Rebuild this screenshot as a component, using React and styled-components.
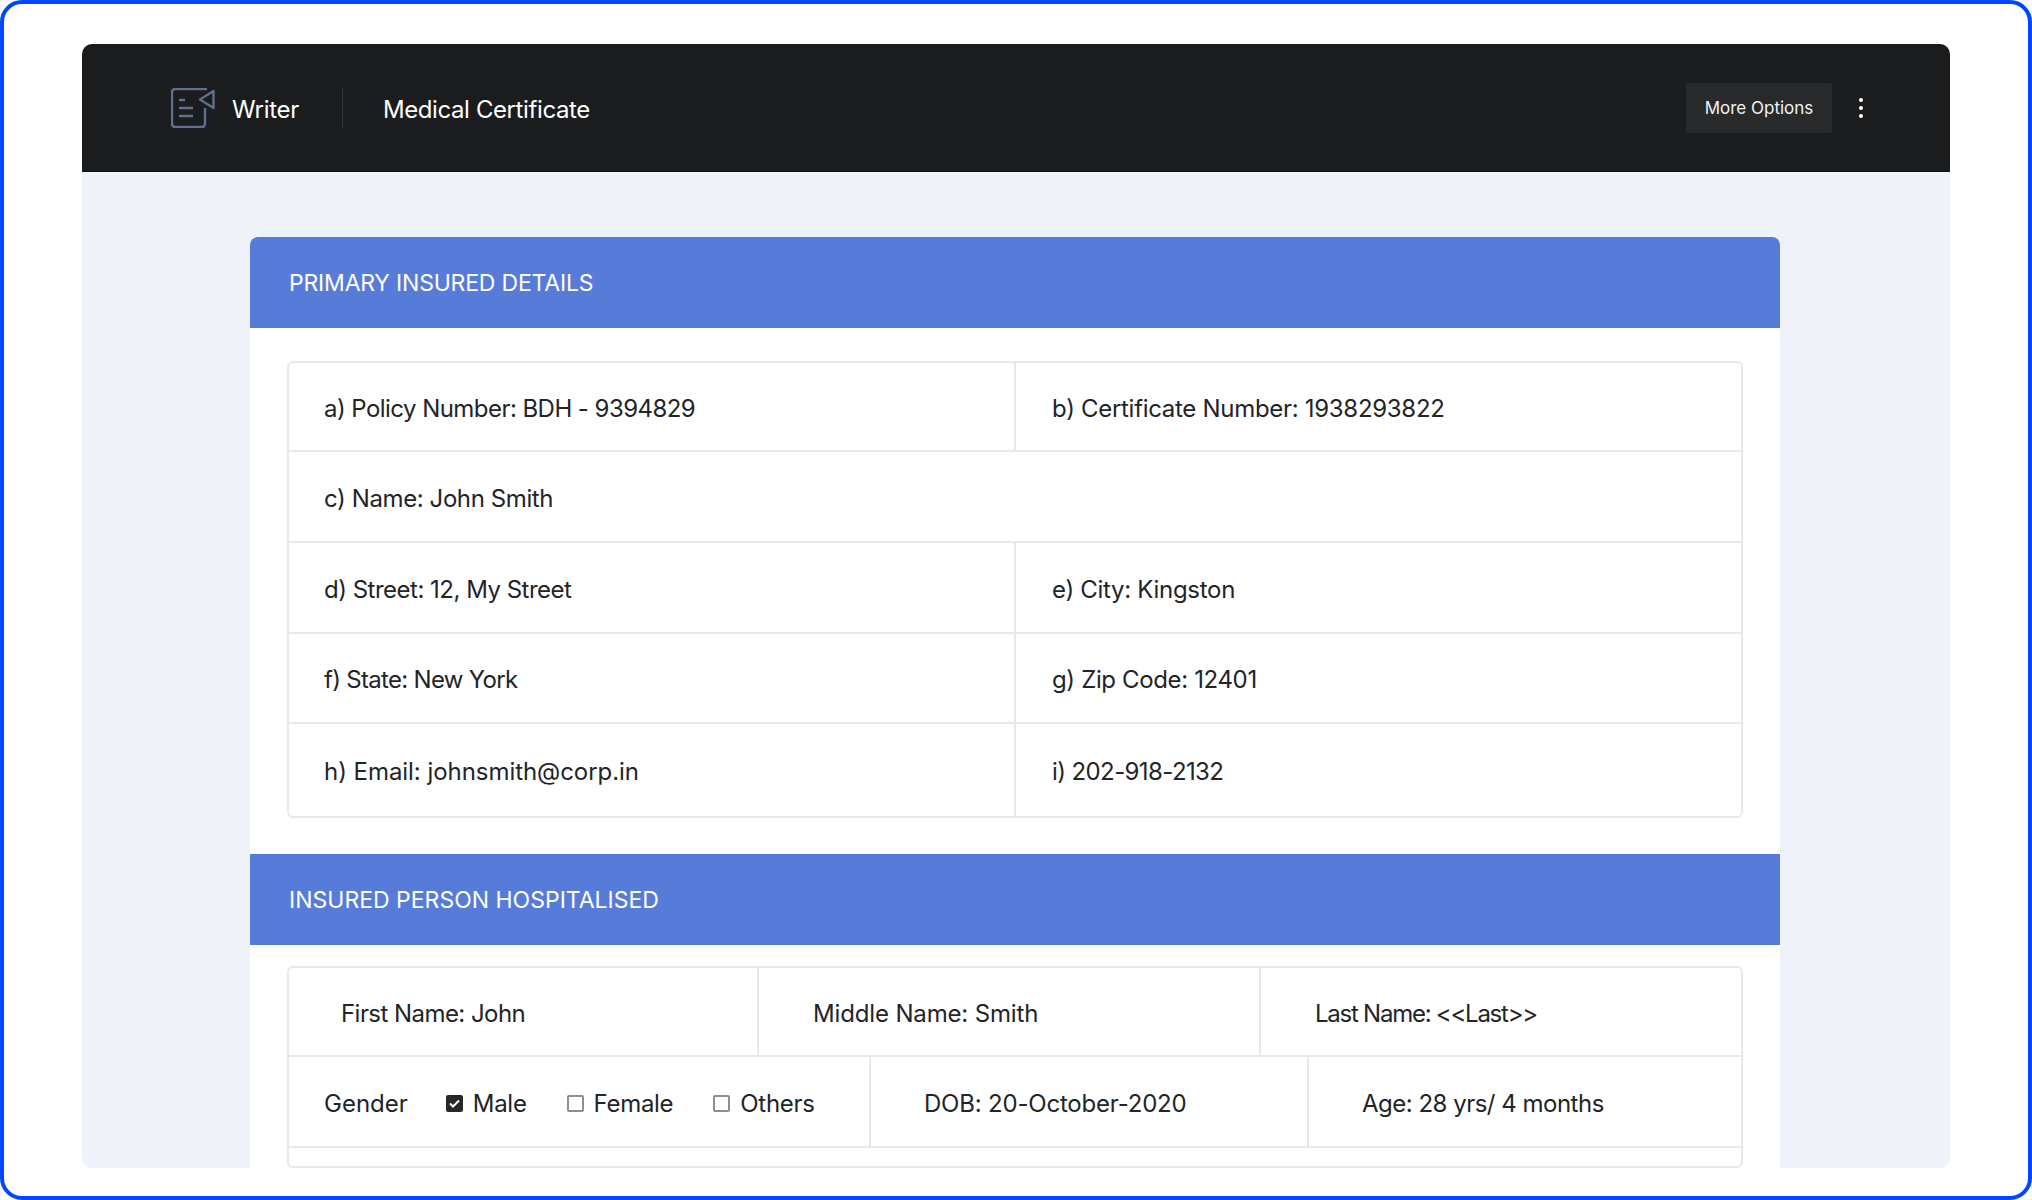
import React from 'react';
import styled, { createGlobalStyle } from 'styled-components';

const GlobalStyle = createGlobalStyle`
  html, body {
    margin: 0;
    padding: 0;
    background: #fff;
  }
  body {
    font-family: Inter, "Liberation Sans", sans-serif;
  }
`;

const Frame = styled.div`
  box-sizing: border-box;
  width: 2032px;
  height: 1200px;
  padding: 40px 78px 28px;
  background: #fff;
  border: 4px solid #0047ff;
  border-radius: 22px;
`;

const Panel = styled.div`
  height: 100%;
  display: flex;
  flex-direction: column;
  background: #eff2f8;
  border-radius: 10px;
  overflow: hidden;
`;

const Header = styled.header`
  flex: none;
  height: 128px;
  display: flex;
  align-items: center;
  padding: 0 81px 0 89px;
  background: #1b1c1e;
  color: #fff;
  border-bottom: 1px solid #101113;
  box-sizing: border-box;
`;

const AppName = styled.span`
  margin-left: 17px;
  padding-top: 3px;
  font-size: 24px;
  font-weight: 400;
  letter-spacing: -0.3px;
`;

const Divider = styled.span`
  width: 1px;
  height: 40px;
  margin: 0 40px 0 43px;
  background: #34363a;
`;

const DocName = styled.span`
  flex: 1;
  padding-top: 3px;
  font-size: 24px;
  font-weight: 400;
  letter-spacing: -0.4px;
`;

const OptionsButton = styled.button`
  width: 146px;
  height: 50px;
  padding: 0;
  margin-right: 21px;
  border: 0;
  border-radius: 2px;
  background: #27292b;
  color: #f2f2f2;
  font: 400 17px Inter, "Liberation Sans", sans-serif;
`;

const Dots = styled.span`
  display: flex;
  flex-direction: column;
  gap: 4px;
  width: 16px;
  align-items: center;
`;

const Dot = styled.i`
  width: 4px;
  height: 4px;
  border-radius: 50%;
  background: #fff;
`;

const Body = styled.main`
  flex: 1;
  min-height: 0;
  padding: 65px 170px 0 168px;
`;

const Card = styled.section`
  height: 100%;
  display: flex;
  flex-direction: column;
  background: #fff;
  border-radius: 8px 8px 0 0;
  overflow: hidden;
`;

const SectionHead = styled.h2`
  flex: none;
  box-sizing: border-box;
  height: 91px;
  margin: 0;
  padding: 0 38px 0 39px;
  display: flex;
  align-items: center;
  background: #577bd9;
  color: #fff;
  font-size: 23px;
  font-weight: 400;
  letter-spacing: ${(p) => p.$track || 0}px;
`;

const Table = styled.div`
  flex: none;
  box-sizing: border-box;
  margin: ${(p) => p.$margin};
  border: 2px solid #e8e8e8;
  border-radius: 6px;
  color: #222427;
  font-size: 24px;
`;

const Row = styled.div`
  box-sizing: border-box;
  height: ${(p) => p.$height}px;
  display: grid;
  grid-template-columns: ${(p) => p.$cols};
  border-bottom: ${(p) => (p.$last ? '0' : '2px solid #e8e8e8')};
`;

const Cell = styled.div`
  box-sizing: border-box;
  display: flex;
  align-items: center;
  padding: 3px 0 0 ${(p) => p.$pad || 35}px;
  white-space: nowrap;
  letter-spacing: ${(p) => p.$track || 0}px;
  border-left: ${(p) => (p.$first ? '0' : '2px solid #e8e8e8')};
`;

const Choice = styled.span`
  display: inline-flex;
  align-items: center;
  gap: 10px;
  margin-left: ${(p) => p.$gap}px;
  letter-spacing: -0.3px;
`;

const Box = styled.span`
  box-sizing: border-box;
  width: 17px;
  height: 17px;
  display: inline-flex;
  align-items: center;
  justify-content: center;
  border: ${(p) => (p.$checked ? '0' : '2px solid #8f8f8f')};
  border-radius: 2px;
  background: ${(p) => (p.$checked ? '#26282b' : '#fff')};
`;

const LogoIcon = () => (
  <svg width="44" height="40" viewBox="0 0 44 40" fill="none" stroke="#5f6f8c" strokeWidth="2.4">
    <path d="M36 1H4a3 3 0 0 0-3 3v32a3 3 0 0 0 3 3h27a3 3 0 0 0 3-3V20" />
    <path d="M42.5 3v17L29 11.5z" strokeLinejoin="round" />
    <path d="M8 12h6M8 20h14M8 28h14" />
  </svg>
);

const Check = () => (
  <svg width="11" height="9" viewBox="0 0 11 9" fill="none" stroke="#fff" strokeWidth="2">
    <path d="M1 4.5l3 3 6-6" />
  </svg>
);

const Gender = ({ label, checked, gap }) => (
  <Choice $gap={gap}>
    <Box $checked={checked}>{checked && <Check />}</Box>
    {label}
  </Choice>
);

const HALF = '725px 1fr';

const App = () => (
  <>
    <GlobalStyle />
    <Frame>
      <Panel>
        <Header>
          <LogoIcon />
          <AppName>Writer</AppName>
          <Divider />
          <DocName>Medical Certificate</DocName>
          <OptionsButton>More Options</OptionsButton>
          <Dots>
            <Dot />
            <Dot />
            <Dot />
          </Dots>
        </Header>
        <Body>
          <Card>
            <SectionHead $track={-0.2}>PRIMARY INSURED DETAILS</SectionHead>
            <Table $margin="33px 37px 36px 37px">
              <Row $height={89} $cols={HALF}>
                <Cell $first $track={-0.55}>a) Policy Number: BDH - 9394829</Cell>
                <Cell $pad={36} $track={-0.3}>b) Certificate Number: 1938293822</Cell>
              </Row>
              <Row $height={91} $cols="1fr">
                <Cell $first $track={-0.4}>c) Name: John Smith</Cell>
              </Row>
              <Row $height={91} $cols={HALF}>
                <Cell $first $track={-0.5}>d) Street: 12, My Street</Cell>
                <Cell $pad={36} $track={-0.3}>e) City: Kingston</Cell>
              </Row>
              <Row $height={90} $cols={HALF}>
                <Cell $first $track={-0.7}>f) State: New York</Cell>
                <Cell $pad={36} $track={-0.36}>g) Zip Code: 12401</Cell>
              </Row>
              <Row $height={92} $cols={HALF} $last>
                <Cell $first $track={-0.05}>h) Email: johnsmith@corp.in</Cell>
                <Cell $pad={36} $track={-0.6}>i) 202-918-2132</Cell>
              </Row>
            </Table>
            <SectionHead>INSURED PERSON HOSPITALISED</SectionHead>
            <Table $margin="21px 37px 0 37px">
              <Row $height={89} $cols="468px 502px 1fr">
                <Cell $first $pad={52} $track={-0.55}>First Name: John</Cell>
                <Cell $pad={54} $track={-0.15}>Middle Name: Smith</Cell>
                <Cell $pad={54} $track={-1.25}>Last Name: &lt;&lt;Last&gt;&gt;</Cell>
              </Row>
              <Row $height={91} $cols="580px 438px 1fr">
                <Cell $first>
                  Gender
                  <Gender label="Male" checked gap={38} />
                  <Gender label="Female" gap={40} />
                  <Gender label="Others" gap={40} />
                </Cell>
                <Cell $pad={53} $track={-0.2}>DOB: 20-October-2020</Cell>
                <Cell $pad={53} $track={-0.5}>Age: 28 yrs/ 4 months</Cell>
              </Row>
              <Row $height={18} $cols="1fr" $last />
            </Table>
          </Card>
        </Body>
      </Panel>
    </Frame>
  </>
);

export default App;
